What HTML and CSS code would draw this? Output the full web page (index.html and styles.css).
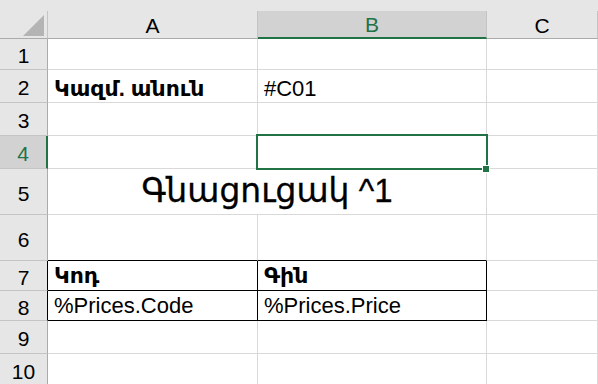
FILE: index.html
```html
<!DOCTYPE html>
<html lang="hy">
<head>
  <meta charset="UTF-8">
  <meta name="viewport" content="width=device-width, initial-scale=1.0">
  <title>Գնացուցակ</title>
  <link rel="stylesheet" href="styles.css">
</head>
<body>

  <div class="topbar"></div>

  <div class="sheet">
    <!-- column headers -->
    <div class="corner"><span class="tri"></span></div>
    <div class="colhead">A</div>
    <div class="colhead sel">B</div>
    <div class="colhead">C</div>

    <!-- row 1 -->
    <div class="rowhead r1">1</div>
    <div class="cell"></div>
    <div class="cell"></div>
    <div class="cell"></div>

    <!-- row 2 -->
    <div class="rowhead">2</div>
    <div class="cell low bold">Կազմ. անուն</div>
    <div class="cell low">#C01</div>
    <div class="cell"></div>

    <!-- row 3 -->
    <div class="rowhead">3</div>
    <div class="cell"></div>
    <div class="cell"></div>
    <div class="cell"></div>

    <!-- row 4 -->
    <div class="rowhead sel">4</div>
    <div class="cell"></div>
    <div class="cell active"></div>
    <div class="cell"></div>

    <!-- row 5 -->
    <div class="rowhead">5</div>
    <div class="cell title">Գնացուցակ ^1</div>
    <div class="cell"></div>

    <!-- row 6 -->
    <div class="rowhead">6</div>
    <div class="cell top-line"></div>
    <div class="cell top-line"></div>
    <div class="cell"></div>

    <!-- row 7 -->
    <div class="rowhead boxed">7</div>
    <div class="cell box bold">Կոդ</div>
    <div class="cell box bold">Գին</div>
    <div class="cell"></div>

    <!-- row 8 -->
    <div class="rowhead boxed">8</div>
    <div class="cell box">%Prices.Code</div>
    <div class="cell box">%Prices.Price</div>
    <div class="cell"></div>

    <!-- row 9 -->
    <div class="rowhead">9</div>
    <div class="cell"></div>
    <div class="cell"></div>
    <div class="cell"></div>

    <!-- row 10 -->
    <div class="rowhead">10</div>
    <div class="cell"></div>
    <div class="cell"></div>
    <div class="cell"></div>
  </div>

</body>
</html>
```

FILE: styles.css
```css
/* page */
* {
  box-sizing: border-box;
}

body {
  margin: 0;
  width: 598px;
  height: 384px;
  overflow: hidden;
  background: #fff;
  font-family: "Liberation Sans", "DejaVu Sans", sans-serif;
  color: #000;
}

/* strip above the column letters */
.topbar {
  height: 11px;
  background: #e6e6e6;
}

/* the grid of cells */
.sheet {
  display: grid;
  grid-template-columns: 48px 210px 229px 1fr;
  grid-template-rows: 28px 31px 33px 33px 33px 46px 46px 30px 30px 33px 33px;
}

.corner {
  position: relative;
  background: #e6e6e6;
  border-right: 1px solid #c4c4c4;
  border-bottom: 1px solid #ababab;
}

.corner .tri {
  position: absolute;
  right: 3px;
  bottom: 2px;
  width: 0;
  height: 0;
  border-left: 21px solid transparent;
  border-bottom: 21px solid #b4b4b4;
}

.colhead {
  display: flex;
  align-items: center;
  justify-content: center;
  padding-top: 2px;
  background: #e6e6e6;
  border-right: 1px solid #c4c4c4;
  border-bottom: 1px solid #ababab;
  font-size: 21px;
}

.colhead.sel {
  background: #d2d2d2;
  color: #217346;
  border-bottom: 2px solid #217346;
}

.rowhead {
  display: flex;
  align-items: center;
  justify-content: center;
  padding-top: 4px;
  background: #e6e6e6;
  border-right: 1px solid #ababab;
  border-bottom: 1px solid #c4c4c4;
  font-size: 21px;
}

.rowhead.sel {
  background: #d2d2d2;
  color: #217346;
  border-right: 2px solid #217346;
}

.rowhead.boxed {
  border-right-color: #000;
}

.cell {
  position: relative;
  display: flex;
  align-items: center;
  padding: 1px 6px 0;
  border-right: 1px solid #d9d9d9;
  border-bottom: 1px solid #d9d9d9;
  font-size: 22px;
  white-space: nowrap;
}

.cell.low {
  padding-top: 6px;
}

.bold {
  font-weight: bold;
}

/* merged A5:B5 */
.cell.title {
  grid-column: span 2;
  justify-content: center;
  padding-top: 0;
  padding-bottom: 2px;
  font-size: 33px;
  -webkit-text-stroke: 0.3px #000;
}

.cell.top-line {
  border-bottom-color: #000;
}

.cell.box {
  border-right-color: #000;
  border-bottom-color: #000;
}

/* selected cell B4 */
.cell.active::after {
  content: "";
  position: absolute;
  left: -2px;
  top: -2px;
  right: -2px;
  bottom: -2px;
  border: 2px solid #217346;
}

.cell.active::before {
  content: "";
  position: absolute;
  right: -4px;
  bottom: -5px;
  width: 6px;
  height: 6px;
  box-sizing: content-box;
  background: #217346;
  border: 1px solid #fff;
  z-index: 1;
}
```
